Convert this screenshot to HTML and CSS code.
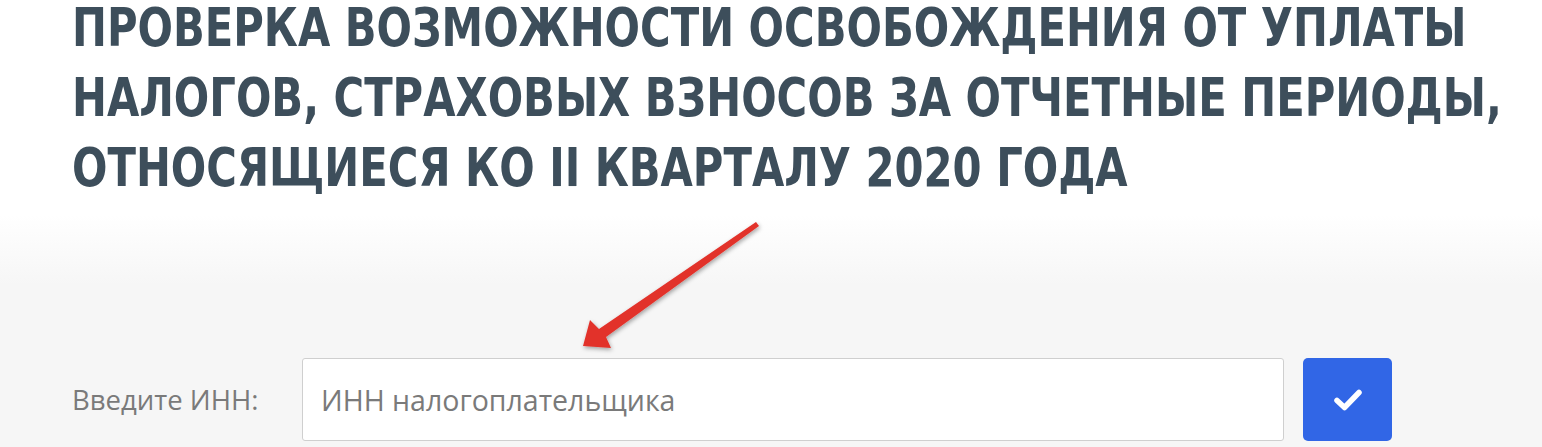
FILE: index.html
```html
<!DOCTYPE html>
<html lang="ru">
<head>
<meta charset="utf-8">
<title>Проверка возможности освобождения</title>
<link rel="stylesheet" href="styles.css">
</head>
<body>
<div class="page">
  <header class="head">
    <h1 class="title">ПРОВЕРКА ВОЗМОЖНОСТИ ОСВОБОЖДЕНИЯ ОТ УПЛАТЫ<br>НАЛОГОВ, СТРАХОВЫХ ВЗНОСОВ ЗА ОТЧЕТНЫЕ ПЕРИОДЫ,<br>ОТНОСЯЩИЕСЯ КО II КВАРТАЛУ 2020 ГОДА</h1>
  </header>
  <section class="panel">
    <form class="form-row">
      <label class="label" for="inn">Введите ИНН:</label>
      <input class="input" id="inn" type="text" placeholder="ИНН налогоплательщика">
      <button class="btn" type="button" aria-label="Проверить">
        <svg width="32" height="26" viewBox="0 0 32 26"><path d="M5 13.5 L12.5 20.5 L27 5.5" fill="none" stroke="#fff" stroke-width="5.5" stroke-linecap="round" stroke-linejoin="round"/></svg>
      </button>
    </form>
  </section>
  <svg class="arrow" width="220" height="160" viewBox="0 0 220 160">
    <defs>
      <filter id="sh" x="-20%" y="-20%" width="140%" height="140%">
        <feDropShadow dx="1" dy="2" stdDeviation="2" flood-color="#000" flood-opacity="0.35"/>
      </filter>
    </defs>
    <polygon filter="url(#sh)" fill="#e2322b" points="196,10 199,14 46,125 51,136 23,134 30,108 39,117"/>
  </svg>
</div>
</body>
</html>
```

FILE: styles.css
```css
html, body {
  margin: 0;
  padding: 0;
  background: #fff;
  overflow: hidden;
}
.page {
  position: relative;
  width: 1542px;
  height: 447px;
  overflow: hidden;
}
.head {
  padding: 0 0 0 72px;
  height: 215px;
}
.title {
  display: inline-block;
  margin: -7px 0 0 0;
  font-family: "DejaVu Sans Condensed", "DejaVu Sans", sans-serif;
  font-stretch: condensed;
  font-weight: 700;
  font-size: 53px;
  line-height: 70px;
  color: #3d4e5b;
  letter-spacing: 0;
  white-space: nowrap;
  transform: scaleX(0.875);
  transform-origin: 0 0;
}
.panel {
  background: linear-gradient(#ffffff 0px, #f6f6f6 70px, #f6f6f6 100%);
  height: 232px;
  padding: 143px 0 0 72px;
  box-sizing: border-box;
}
.form-row {
  display: flex;
  align-items: center;
  margin: 0;
}
.label {
  width: 230px;
  font-family: "Open Sans", sans-serif;
  font-size: 27.5px;
  color: #7a7a7a;
}
.input {
  width: 982px;
  height: 83px;
  box-sizing: border-box;
  border: 1px solid #cfcfcf;
  border-radius: 3px;
  background: #fff;
  padding: 0 18px;
  font-family: "Open Sans", sans-serif;
  font-size: 28.5px;
  color: #555;
  outline: none;
}
.input::placeholder {
  color: #7a7a7a;
}
.btn {
  margin-left: 19px;
  width: 89px;
  height: 83px;
  border: none;
  border-radius: 5px;
  background: #3166e6;
  display: flex;
  align-items: center;
  justify-content: center;
  padding: 0;
}
.arrow {
  position: absolute;
  left: 560px;
  top: 212px;
}
```
